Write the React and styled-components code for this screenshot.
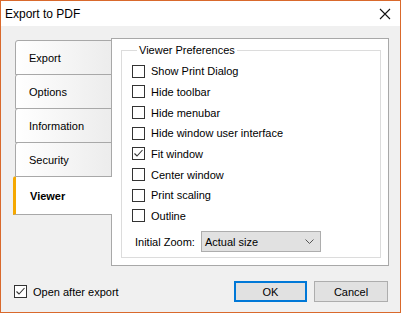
import styled, { createGlobalStyle } from 'styled-components'

const GlobalStyle = createGlobalStyle`
  html, body {
    margin: 0;
    padding: 0;
    background: #ffffff;
  }
  body {
    font-family: "Liberation Sans", Arial, sans-serif;
    font-size: 11px;
    color: #000;
  }
`

const Window = styled.div`
  box-sizing: border-box;
  width: 401px;
  height: 313px;
  display: flex;
  flex-direction: column;
  border: 1px solid #d9692c;
  background: #f0f0f0;
`

const TitleBar = styled.div`
  height: 25px;
  display: flex;
  align-items: center;
  justify-content: space-between;
  padding: 0 9px 0 4px;
  background: #ffffff;
  font-size: 12px;
`

const CloseIcon = () => (
  <svg width="12" height="12" viewBox="0 0 12 12">
    <path d="M1 1 L11 11 M11 1 L1 11" stroke="#111" strokeWidth="1.1" fill="none" />
  </svg>
)

const Body = styled.div`
  flex: 1;
  display: flex;
  flex-direction: column;
  padding: 12px 11px 0 12px;
`

const Main = styled.div`
  display: flex;
  height: 228px;
`

const TabList = styled.div`
  width: 99px;
  display: flex;
  flex-direction: column;
  padding-top: 2px;
  position: relative;
  z-index: 1;
  margin-right: -1px;
`

const Tab = styled.div`
  box-sizing: border-box;
  height: ${p => (p.$active ? '39px' : '35px')};
  margin-left: ${p => (p.$active ? '0' : '2px')};
  margin-top: -1px;
  display: flex;
  align-items: center;
  padding-left: ${p => (p.$active ? '14px' : '13px')};
  border: 1px solid #a8a8a8;
  border-right: ${p => (p.$active ? 'none' : '1px solid #a8a8a8')};
  border-left: ${p => (p.$active ? '3px solid #f5a800' : '1px solid #a8a8a8')};
  border-top-left-radius: 3px;
  background: ${p => (p.$active ? '#ffffff' : 'linear-gradient(to right, #ffffff, #ececec)')};
  font-weight: ${p => (p.$active ? 700 : 400)};
  &:first-child {
    margin-top: 0;
  }
`

const Panel = styled.div`
  flex: 1;
  box-sizing: border-box;
  border: 1px solid #a8a8a8;
  background: #ffffff;
  padding: 4px 7px 0 9px;
`

const Group = styled.fieldset`
  box-sizing: border-box;
  margin: 0;
  height: 215px;
  border: 1px solid #dcdcdc;
  padding: 4px 10px 0 10px;
  display: flex;
  flex-direction: column;
`

const Legend = styled.legend`
  padding: 0 2px;
  margin-left: 5px;
  line-height: 14px;
`

const Row = styled.label`
  display: flex;
  align-items: center;
  gap: 6px;
  height: 20.67px;
`

const Box = styled.span`
  box-sizing: border-box;
  width: 13px;
  height: 13px;
  border: 1px solid #333;
  background: #fff;
  display: flex;
  align-items: center;
  justify-content: center;
`

const Check = () => (
  <svg width="11" height="11" viewBox="0 0 11 11">
    <path d="M1.5 5.5 L4 8 L9.5 2" stroke="#333" strokeWidth="1.1" fill="none" />
  </svg>
)

const CheckBox = ({ checked, children }) => (
  <Row>
    <Box>{checked && <Check />}</Box>
    {children}
  </Row>
)

const ZoomRow = styled.div`
  display: flex;
  align-items: center;
  gap: 6px;
  margin-top: 5px;
  padding-left: 3px;
`

const Select = styled.div`
  box-sizing: border-box;
  width: 120px;
  height: 21px;
  display: flex;
  align-items: center;
  justify-content: space-between;
  padding: 0 6px 0 3px;
  background: #e1e1e1;
  border: 1px solid #adadad;
`

const Chevron = () => (
  <svg width="9" height="6" viewBox="0 0 9 6">
    <path d="M0.5 0.5 L4.5 4.5 L8.5 0.5" stroke="#555" strokeWidth="1" fill="none" />
  </svg>
)

const Footer = styled.div`
  display: flex;
  align-items: center;
  margin-top: 15px;
  padding-right: 1px;
`

const FooterCheck = styled(Row)`
  padding-left: 1px;
  flex: 1;
`

const Button = styled.button`
  box-sizing: border-box;
  width: ${p => (p.$primary ? '73px' : '74px')};
  height: 21px;
  margin-left: 7px;
  font-family: inherit;
  font-size: 11px;
  color: #000;
  background: #e1e1e1;
  border: ${p => (p.$primary ? '2px solid #0078d7' : '1px solid #adadad')};
  padding: 0;
`

const options = [
  ['Show Print Dialog', false],
  ['Hide toolbar', false],
  ['Hide menubar', false],
  ['Hide window user interface', false],
  ['Fit window', true],
  ['Center window', false],
  ['Print scaling', false],
  ['Outline', false],
]

const tabs = ['Export', 'Options', 'Information', 'Security', 'Viewer']

export default function App() {
  return (
    <>
      <GlobalStyle />
      <Window>
        <TitleBar>
          <span>Export to PDF</span>
          <CloseIcon />
        </TitleBar>
        <Body>
          <Main>
            <TabList>
              {tabs.map(t => (
                <Tab key={t} $active={t === 'Viewer'}>{t}</Tab>
              ))}
            </TabList>
            <Panel>
              <Group>
                <Legend>Viewer Preferences</Legend>
                {options.map(([label, checked]) => (
                  <CheckBox key={label} checked={checked}>{label}</CheckBox>
                ))}
                <ZoomRow>
                  <span>Initial Zoom:</span>
                  <Select>
                    <span>Actual size</span>
                    <Chevron />
                  </Select>
                </ZoomRow>
              </Group>
            </Panel>
          </Main>
          <Footer>
            <FooterCheck as="label">
              <Box><Check /></Box>
              Open after export
            </FooterCheck>
            <Button $primary>OK</Button>
            <Button>Cancel</Button>
          </Footer>
        </Body>
      </Window>
    </>
  )
}
